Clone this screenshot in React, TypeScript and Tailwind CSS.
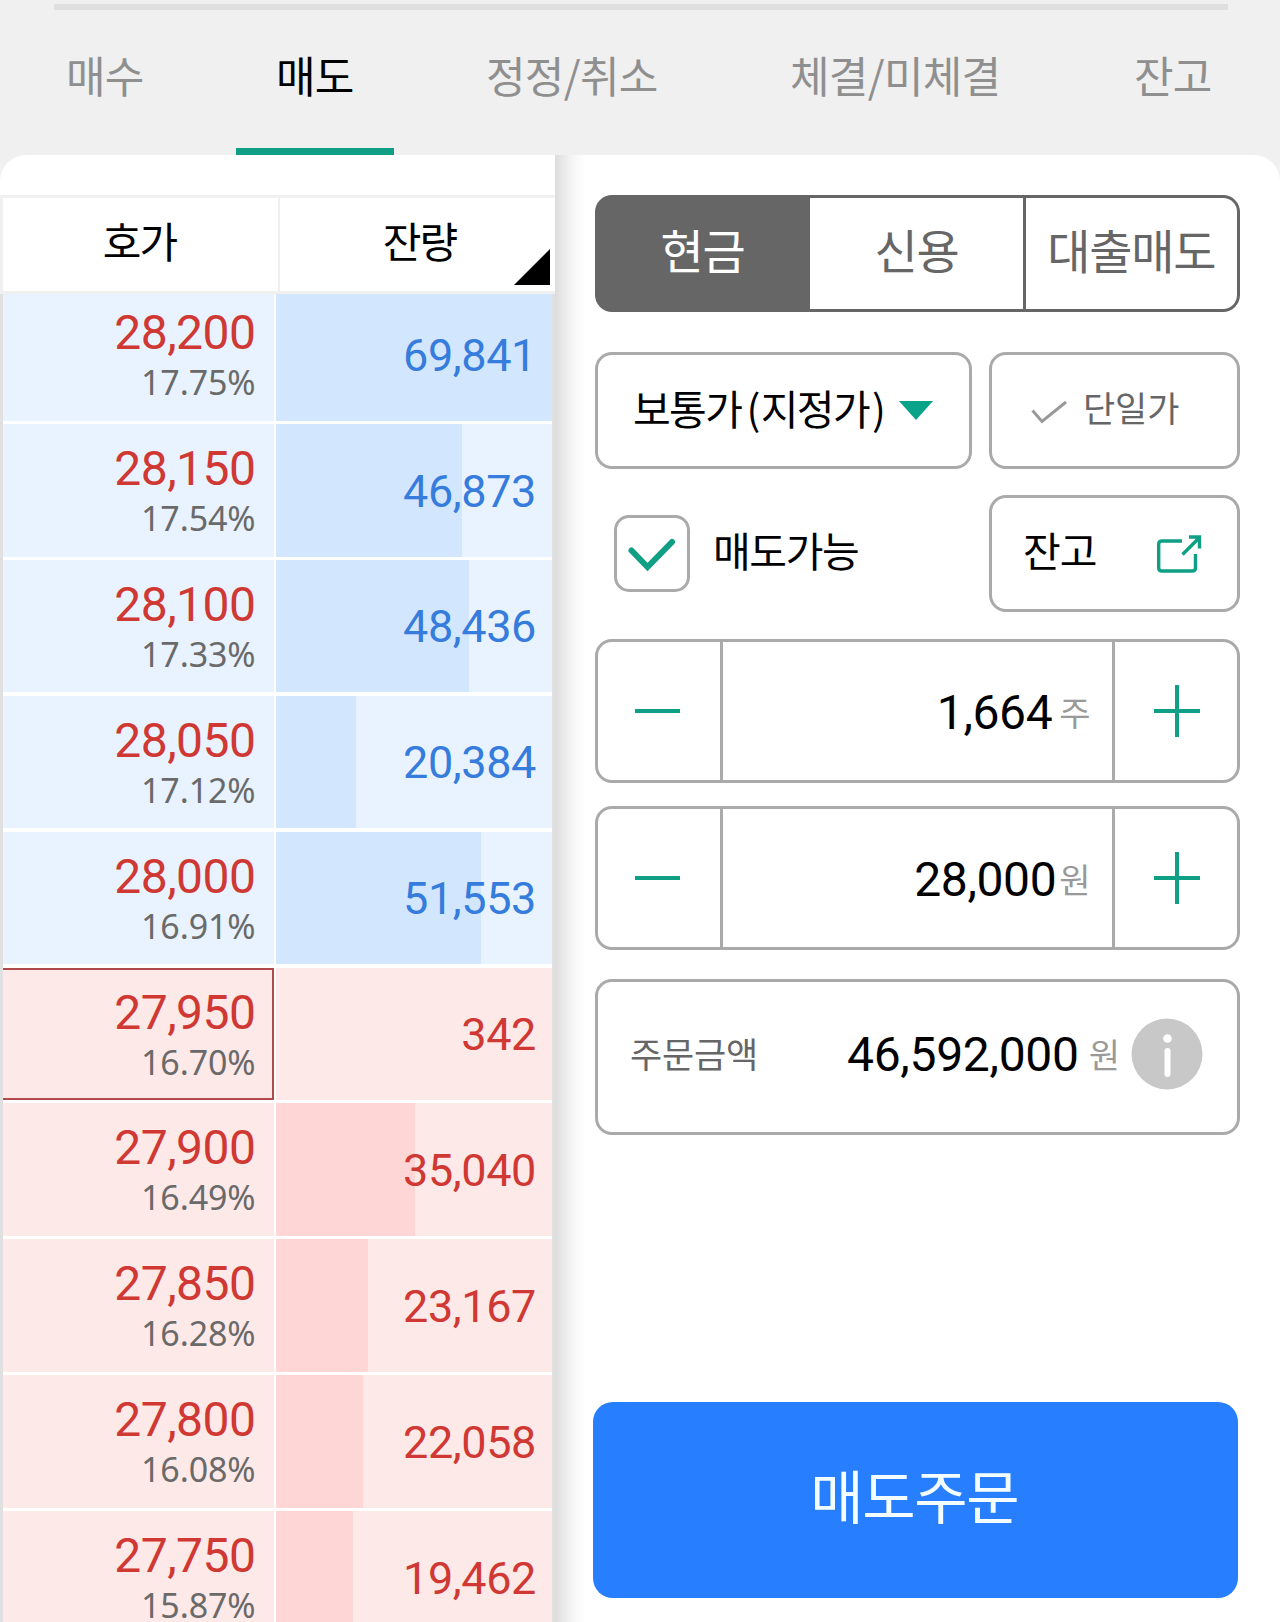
import React from "react";

const HANGUL = "font-['Noto_Sans_CJK_KR',sans-serif]";
const DIGITS = "font-['Roboto',sans-serif]";

type Level = { price: string; rate: string; qty: string; bar: number; side: "ask" | "bid"; current?: boolean };

const levels: Level[] = [
  { price: "28,200", rate: "17.75%", qty: "69,841", bar: 276, side: "ask" },
  { price: "28,150", rate: "17.54%", qty: "46,873", bar: 186, side: "ask" },
  { price: "28,100", rate: "17.33%", qty: "48,436", bar: 192.5, side: "ask" },
  { price: "28,050", rate: "17.12%", qty: "20,384", bar: 80, side: "ask" },
  { price: "28,000", rate: "16.91%", qty: "51,553", bar: 205, side: "ask" },
  { price: "27,950", rate: "16.70%", qty: "342", bar: 0, side: "bid", current: true },
  { price: "27,900", rate: "16.49%", qty: "35,040", bar: 139, side: "bid" },
  { price: "27,850", rate: "16.28%", qty: "23,167", bar: 92, side: "bid" },
  { price: "27,800", rate: "16.08%", qty: "22,058", bar: 87, side: "bid" },
  { price: "27,750", rate: "15.87%", qty: "19,462", bar: 76.5, side: "bid" },
];

function Tabs() {
  const base = "h-[54px] text-[43px] leading-[54px] tracking-[-0.7px] whitespace-nowrap";
  return (
    <nav className="flex h-[145px] pt-[37px] text-[#8f8f8f]">
      <div className={`${base} ml-[66px] w-[210px]`}>매수</div>
      <div className="relative w-[210px]">
        <div className={`${base} text-black`}>매도</div>
        <div className="absolute top-[101px] left-[-40px] h-[7px] w-[158px] bg-[#0f9f84]" />
      </div>
      <div className={`${base} w-[304px]`}>정정/취소</div>
      <div className={`${base} w-[344px]`}>체결/미체결</div>
      <div className={base}>잔고</div>
    </nav>
  );
}

function Row({ level }: { level: Level }) {
  const ask = level.side === "ask";
  const bg = ask ? "bg-[#e8f3ff]" : "bg-[#fee9e9]";
  return (
    <div className="mb-[3.3px] flex h-[132.6px] gap-[2.5px]">
      <div
        className={`flex w-[270.5px] flex-col items-end pt-[21px] pr-[18px] ${bg} ${
          level.current ? "shadow-[inset_-2px_2px_0_#b04a4c,inset_0_-2px_0_#b04a4c]" : ""
        }`}
      >
        <div className={`${DIGITS} text-[48px] leading-[48px] tracking-[-0.5px] text-[#cf3833]`}>{level.price}</div>
        <div className="mt-[5px] font-['Noto_Sans',sans-serif] text-[34px] leading-[40px] font-normal tracking-[-0.1px] text-[#6a6a6a]">
          {level.rate}
        </div>
      </div>
      <div className={`relative w-[275.5px] ${bg}`}>
        <div
          className={`absolute inset-y-0 left-0 ${ask ? "bg-[#d2e6fe]" : "bg-[#fed6d6]"}`}
          style={{ width: Math.min(level.bar, 275.5) }}
        />
        <div
          className={`${DIGITS} relative pt-[43.5px] pr-[15.5px] text-right text-[45px] leading-[48px] tracking-[-0.4px] ${
            ask ? "text-[#357cdc]" : "text-[#cf3833]"
          }`}
        >
          {level.qty}
        </div>
      </div>
    </div>
  );
}

function OrderBook() {
  return (
    <div className="flex w-[555px] flex-none flex-col bg-white">
      <div className="h-[40px]" />
      <div className="flex h-[98.5px] border-t-[3px] border-b-[3.5px] border-l-[3px] border-[#f0f0f0] text-[42px] leading-[50px] tracking-[-2px] text-black">
        <div className="w-[277px] border-r-2 border-[#f0f0f0] pt-[17px] pr-[2px] text-center">호가</div>
        <div className="relative flex-1 pt-[17px] pl-[4px] text-center">
          잔량
          <svg className="absolute right-[5px] bottom-[6px]" width="36" height="36" viewBox="0 0 36 36">
            <path d="M36 0V36H0Z" fill="#000" />
          </svg>
        </div>
      </div>
      <div className="flex-1 overflow-hidden border-r-[3.5px] border-l-[3px] border-[#e0e0e0]">
        <div className="mt-[-5.4px]">
          {levels.map((l) => (
            <Row key={l.price} level={l} />
          ))}
        </div>
      </div>
    </div>
  );
}

function Stepper({ value, unit, gap }: { value: string; unit: string; gap: string }) {
  return (
    <div className="flex h-[144px] rounded-[17px] border-[3px] border-[#aaa]">
      <div className="flex w-[122px] items-center justify-center">
        <svg width="46" height="52" viewBox="0 0 46 52" className="mr-[5px]">
          <path d="M1 26H46" stroke="#0f9f84" strokeWidth="4" />
        </svg>
      </div>
      <div className="flex flex-1 justify-end border-x-[3px] border-[#aaa] pt-[39px] pr-[21px]">
        <span className={`${DIGITS} mt-[2px] text-[48px] leading-[60px] tracking-[-0.4px] text-black ${gap}`}>{value}</span>
        <span className="mt-[1px] text-[34px] leading-[60px] text-[#999]">{unit}</span>
      </div>
      <div className="flex w-[122px] items-center justify-center">
        <svg width="46" height="52" viewBox="0 0 46 52" className="ml-[3px]">
          <path d="M0 26H46M23 0V52" stroke="#0f9f84" strokeWidth="4" />
        </svg>
      </div>
    </div>
  );
}

function OrderForm() {
  const box = "rounded-[17px] border-[3px] border-[#aaa]";
  return (
    <div className="flex flex-1 bg-white">
      <div className="w-[30px] flex-none bg-[linear-gradient(to_right,#dcdcdc_0%,#e8e8e8_25%,#f6f6f6_60%,#fff_100%)]" />
      <div className="ml-[10px] flex w-[644.5px] flex-col pt-[40px]">
        <div className="flex h-[117px] rounded-[17px] bg-[#666] p-[3px] text-center text-[47px] leading-[56px] tracking-[-1.2px] text-[#666]">
          <div className="w-[212px] pt-[23px] pr-[3px] text-white">현금</div>
          <div className="mr-[3px] w-[213px] bg-white pt-[23px]">신용</div>
          <div className="flex-1 rounded-r-[14px] bg-white pt-[23px]">대출매도</div>
        </div>

        <div className="mt-[39.5px] flex h-[117px] gap-[17px]">
          <div className={`${box} flex w-[377px] items-start pt-[24px] pl-[35px]`}>
            <span className="text-[41px] leading-[56px] tracking-[-1.6px] whitespace-nowrap text-black">
              보통가<span className="mr-[2px] ml-[5px]">(</span>지정가<span className="ml-[3px]">)</span>
            </span>
            <svg width="34" height="19" viewBox="0 0 34 19" className="mt-[22px] ml-[15px] flex-none">
              <path d="M0 0H34L17 19Z" fill="#08a388" />
            </svg>
          </div>
          <div className={`${box} flex flex-1 items-start pt-[25px] pl-[38px]`}>
            <svg width="38" height="26" viewBox="0 0 38 26" className="mt-[19px]" fill="none">
              <path d="M2.500 11.500L12 22.500L36 3" stroke="#999" strokeWidth="3" />
            </svg>
            <span className="ml-[15px] text-[35px] leading-[54px] tracking-[-0.1px] text-[#666]">단일가</span>
          </div>
        </div>

        <div className="mt-[26.5px] flex h-[117px]">
          <div className="mt-[20px] ml-[19px] flex h-[77px] w-[76px] items-center justify-center rounded-[15px] border-[3px] border-[#aaa]">
            <svg width="50" height="36" viewBox="0 0 50 36" fill="none" className="mt-[3px]">
              <path d="M4.500 13.500L20.500 30L45 5" stroke="#0f9f84" strokeWidth="6" strokeLinecap="round" />
            </svg>
          </div>
          <div className="mt-[26px] ml-[23px] w-[276px] text-[41px] leading-[56px] tracking-[-1.4px] text-black">매도가능</div>
          <div className={`${box} flex flex-1 items-start pt-[23px] pl-[31px]`}>
            <span className="text-[41px] leading-[56px] tracking-[-1px] text-black">잔고</span>
            <svg width="46" height="42" viewBox="0 0 46 42" fill="none" className="mt-[12px] ml-[60px]" stroke="#0f9f84" strokeWidth="3.400">
              <path d="M26 8H6Q2.700 8 2.700 11V35Q2.700 38 6 38H36Q39.500 38 39.500 35V21" />
              <path d="M26.500 21.500L42.500 5.500M33 4H43.500V15.500" />
            </svg>
          </div>
        </div>

        <div className="mt-[27px]">
          <Stepper value="1,664" unit="주" gap="mr-[7px]" />
        </div>
        <div className="mt-[23px]">
          <Stepper value="28,000" unit="원" gap="mr-[3px]" />
        </div>

        <div className={`${box} mt-[28.5px] flex h-[156px] items-start`}>
          <span className="mt-[43px] ml-[32px] w-[168px] text-[35px] leading-[56px] tracking-[-0.2px] whitespace-nowrap text-[#666]">주문금액</span>
          <div className="flex w-[322px] justify-end pt-[43px]">
            <span className={`${DIGITS} mr-[10px] text-[48px] leading-[60px] tracking-[-0.3px] text-black`}>46,592,000</span>
            <span className="text-[34px] leading-[58px] text-[#999]">원</span>
          </div>
          <svg width="72" height="72" viewBox="0 0 72 72" className="mt-[36px] ml-[11px]">
            <circle cx="36" cy="36" r="35.500" fill="#c8c8c8" />
            <circle cx="36.500" cy="20.500" r="4.300" fill="#fff" />
            <path d="M36.500 33V56" stroke="#fff" strokeWidth="6" strokeLinecap="round" />
          </svg>
        </div>

        <div className="mt-[267px] ml-[-2.5px] h-[196px] w-[645.5px] rounded-[20px] bg-[#277eff] pt-[56px] pr-[2px] text-center text-[58px] leading-[72px] tracking-[-1.4px] text-[#f3fdff]">
          매도주문
        </div>
      </div>
    </div>
  );
}

export default function App() {
  return (
    <div className={`h-[1622px] w-[1280px] overflow-hidden bg-[#f0f0f0] ${HANGUL}`}>
      <div className="h-[10px] pt-[4px]">
        <div className="ml-[54px] h-[6px] w-[1174px] bg-[#dfdfdf]" />
      </div>
      <Tabs />
      <main className="flex h-[1467px] overflow-hidden rounded-t-[26px]">
        <OrderBook />
        <OrderForm />
      </main>
    </div>
  );
}
